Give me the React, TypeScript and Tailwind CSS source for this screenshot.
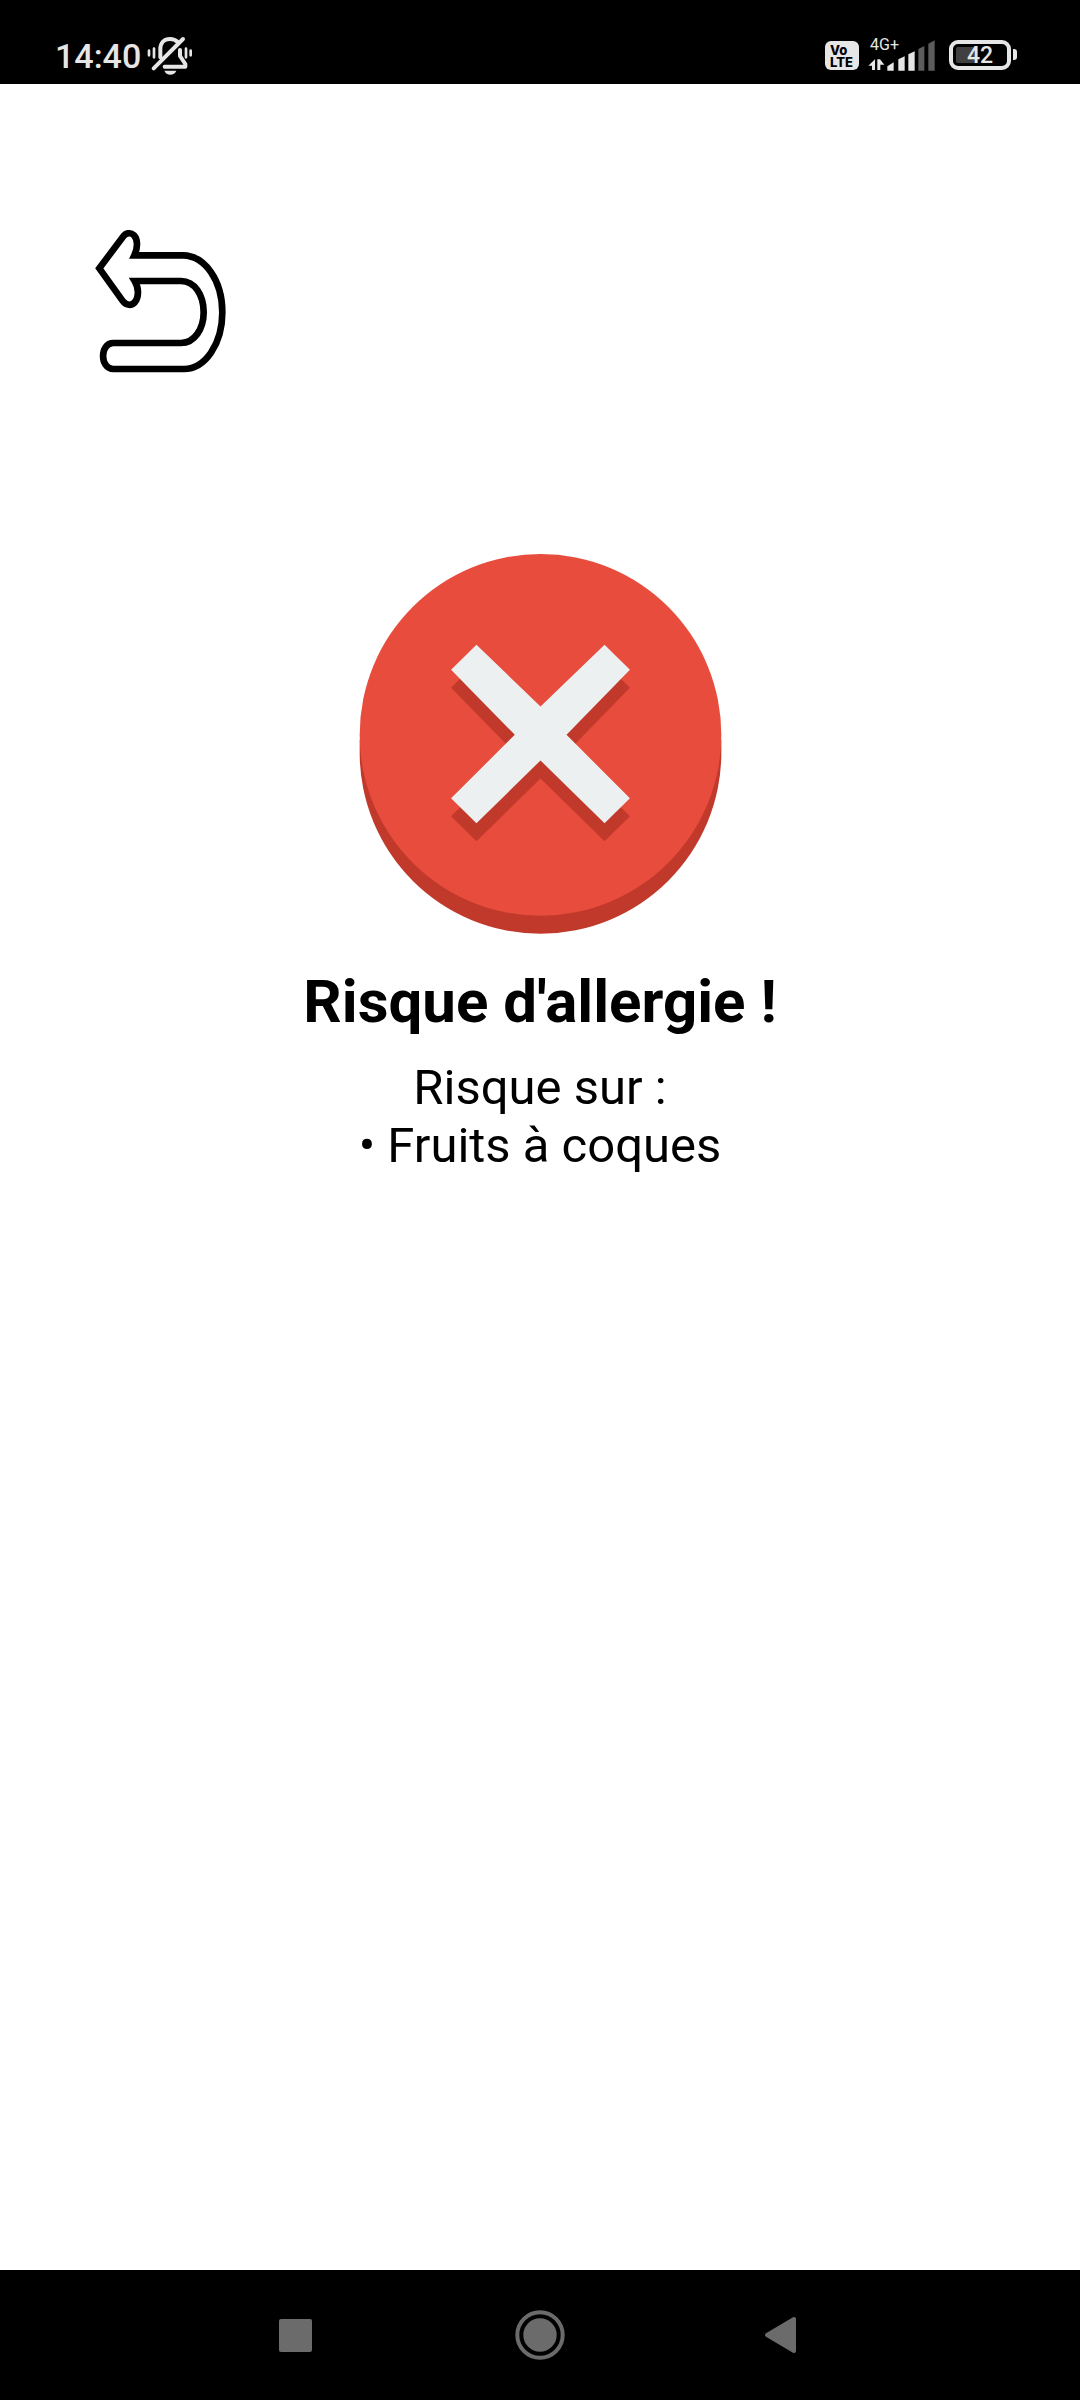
import React from 'react';

const allergens = ['Fruits à coques'];

function SilentIcon() {
  return (
    <svg viewBox="321 48 138 120" className="w-[46px] h-10" fill="none" stroke="#e6e6e6" aria-hidden="true">
      <g strokeWidth="8" strokeLinecap="round">
        <path d="M327 92V106M342 86V112M438 86V112M452 92V106" />
      </g>
      <g strokeWidth="12" strokeLinecap="round" strokeLinejoin="round">
        <path d="M361 112V88C361 68 373 57 390 57C399 57 407 60 413 66" />
        <path d="M420 90V108L436 132V140H374" />
        <path d="M341 145L429 57" />
      </g>
      <path d="M373 152H409C406 160 399 164 391 164C383 164 376 160 373 152Z" fill="#e6e6e6" stroke="none" />
    </svg>
  );
}

function SignalIcon() {
  return (
    <svg viewBox="174 60 204 93" className="w-[68px] h-[31px]" aria-hidden="true">
      <g fill="#e6e6e6">
        <path d="M195 118V150H186V137H175Z" />
        <path d="M202 150V118H210L223 134H211V150Z" />
        <path d="M232 152V139L251 127V152Z" />
        <path d="M265 152V118L284 109V152Z" />
        <path d="M295 152V103L314 94V152Z" />
      </g>
      <g fill="#5c5c5c">
        <path d="M325 152V87L343 78V152Z" />
        <path d="M355 152V71L374 61V152Z" />
      </g>
    </svg>
  );
}

function StatusBar() {
  return (
    <header className="flex items-start justify-between h-[84px] bg-black text-[#e6e6e6] pl-[55px] pr-[63px] pt-9">
      <div className="flex items-center gap-[6px]">
        <span className="text-[34px] leading-10 font-medium">14:40</span>
        <SilentIcon />
      </div>

      <div className="flex items-start">
        <div className="mt-[5px] mr-[9px] w-[34px] h-[29px] rounded-[6px] bg-[#e6e6e6] text-black pl-[5px] pt-[3px] font-['Inter',sans-serif] text-[13px] leading-[12px] font-extrabold">
          <p>Vo</p>
          <p>LTE</p>
        </div>
        <div className="relative mt-1 mr-[13px]">
          <SignalIcon />
          <span className="absolute left-[2px] -top-1 text-[16px] leading-[18px]">4G+</span>
        </div>
        <div className="relative mt-1 w-[62px] h-[30px] rounded-[9px] border-4 border-[#e6e6e6] p-[3px]">
          <div className="w-[42%] h-full rounded-[2px] bg-[#404040]" />
          <span className="absolute inset-0 text-center text-[23px] leading-[24px] font-medium">42</span>
        </div>
        <div className="mt-[13px] ml-[2px] w-1 h-[11px] rounded-r-[3px] bg-[#e6e6e6]" />
      </div>
    </header>
  );
}

function BackIcon() {
  return (
    <svg viewBox="45 56 396 432" className="w-[132px] h-36" fill="none" stroke="#000" strokeWidth="20" aria-hidden="true">
      <path d="M58 174L129 79C137 68 152 65 161 74C174 86 174 112 163 135H310C375 137 427 210 427 306C427 402 375 476 312 476H100C59 476 59 398 100 398H303C344 398 371 355 371 306C371 254 344 212 303 212H164C178 235 176 261 165 275C155 287 139 286 129 273Z" />
    </svg>
  );
}

function ErrorIcon() {
  return (
    <svg viewBox="56 40 1088 1142" className="w-[363px] h-[381px]" role="img" aria-label="Risque">
      <path fill="#c0392b" d="M58 600V639A542 542 0 0 0 1142 639V600Z" />
      <circle cx="600" cy="585" r="542" fill="#e84c3d" />
      <path fill="#c0392b" d="M408 369L600 554L792 369L868 444L678 639L868 829L792 904L600 716L408 904L332 829L523 639L332 444Z" />
      <path fill="#ecf0f1" d="M408 315L600 500L792 315L868 390L678 585L868 775L792 850L600 662L408 850L332 775L523 585L332 390Z" />
    </svg>
  );
}

function NavBar() {
  return (
    <nav className="grid grid-cols-[1fr_auto_1fr] items-center h-[130px] bg-black text-[#6b6b6b]">
      <button aria-label="Applications récentes" className="justify-self-end mr-[203px]">
        <svg viewBox="0 0 33 33" className="block w-[33px] h-[33px]" fill="currentColor">
          <rect width="33" height="33" rx="2" />
        </svg>
      </button>
      <button aria-label="Accueil">
        <svg viewBox="0 0 50 50" className="block w-[50px] h-[50px]">
          <circle cx="25" cy="25" r="22.7" fill="none" stroke="currentColor" strokeWidth="4" />
          <circle cx="25" cy="25" r="16.7" fill="currentColor" />
        </svg>
      </button>
      <button aria-label="Retour système" className="justify-self-start ml-[199px]">
        <svg viewBox="0 0 33 38" className="block w-[33px] h-[38px]" fill="currentColor" stroke="currentColor" strokeWidth="4" strokeLinejoin="round">
          <path d="M3 19L30 3V35Z" />
        </svg>
      </button>
    </nav>
  );
}

export default function App() {
  return (
    <div className="flex flex-col min-h-screen bg-white text-black font-['Roboto',sans-serif]">
      <StatusBar />

      <main className="flex-1 flex flex-col pt-[145px]">
        <button aria-label="Retour" className="self-start ml-[95px]">
          <BackIcon />
        </button>

        <section className="flex flex-col items-center text-center mt-[180px]">
          <ErrorIcon />
          <h1 className="mt-8 text-[60px] leading-[72px] font-bold">Risque d'allergie !</h1>
          <div className="mt-[21px] text-[49px] leading-[58px]">
            <p>Risque sur :</p>
            <ul>
              {allergens.map((name) => (
                <li key={name}>• {name}</li>
              ))}
            </ul>
          </div>
        </section>
      </main>

      <NavBar />
    </div>
  );
}
